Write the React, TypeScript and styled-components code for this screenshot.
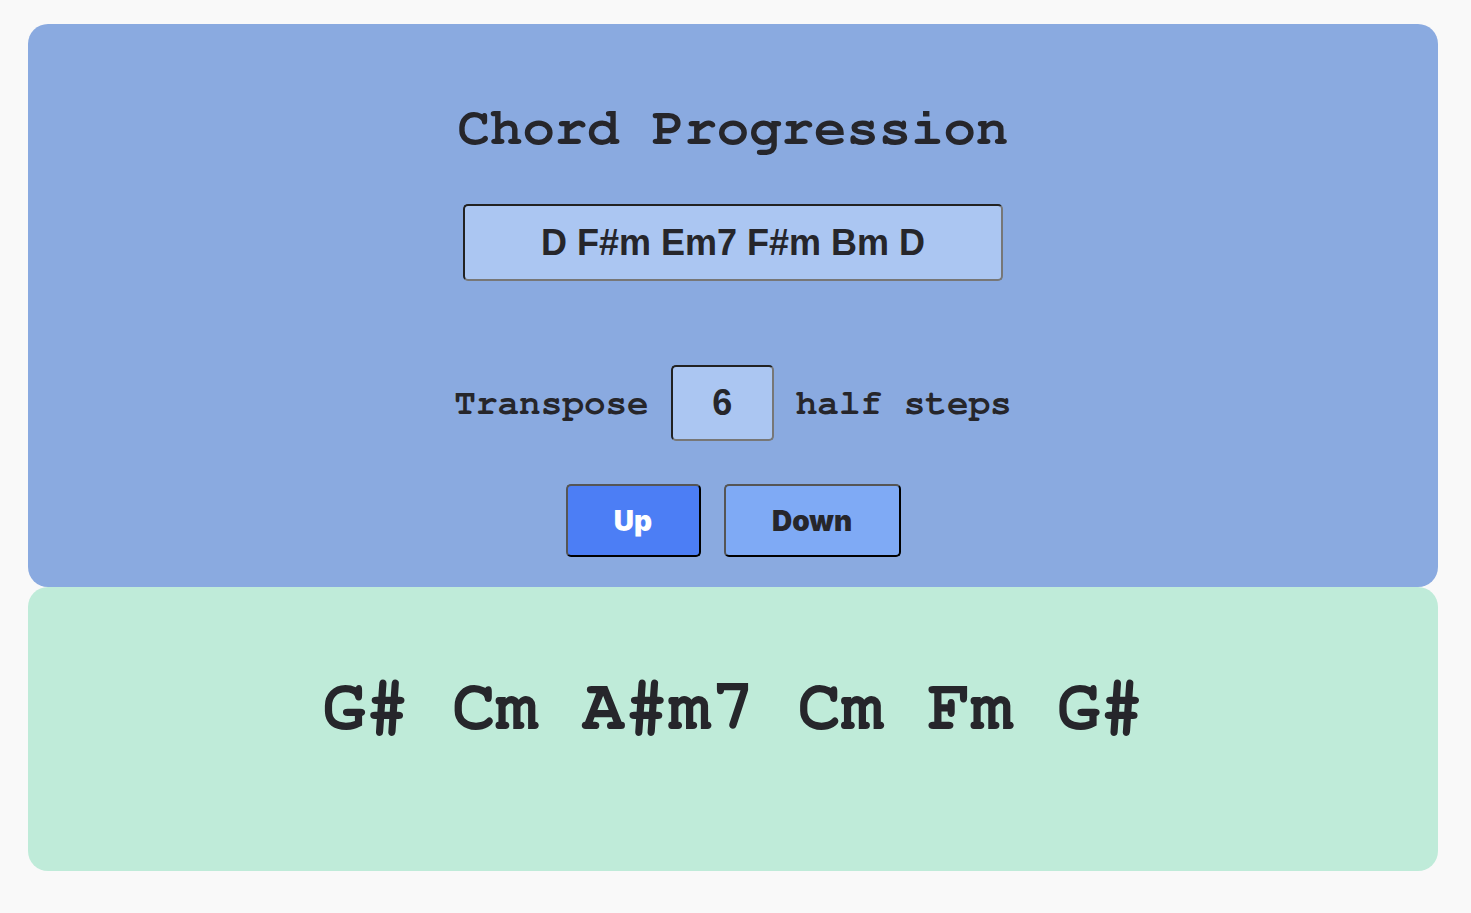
import React, { useState } from "react";
import styled, { createGlobalStyle } from "styled-components";

const Global = createGlobalStyle`
  html, body { margin: 0; padding: 0; background: #f9f9f9; }
  body { font-family: FreeMono, "Liberation Mono", monospace; color: #26262b; }
`;

const Page = styled.div`
  padding: 24px 33px 42px 28px;
  display: flex;
  flex-direction: column;
`;

const Panel = styled.section<{ $bg: string; $h: number }>`
  background: ${(p) => p.$bg};
  border-radius: 20px;
  height: ${(p) => p.$h}px;
  box-sizing: border-box;
  display: flex;
  flex-direction: column;
  align-items: center;
`;

const Title = styled.h1`
  margin: 74px 0 0;
  font-family: FreeMono, "Liberation Mono", monospace;
  font-weight: 700;
  font-size: 54px;
  line-height: 60px;
  color: #26262b;
`;

const ChordInput = styled.input`
  margin-top: 46px;
  width: 540px;
  height: 77px;
  box-sizing: border-box;
  border: 2px solid;
  border-color: #222 #777 #777 #222;
  border-radius: 5px;
  background: #abc6f2;
  font-family: "Liberation Sans", Arial, sans-serif;
  font-weight: 700;
  font-size: 36px;
  text-align: center;
  color: #26262b;
  outline: none;
`;

const Row = styled.div`
  margin-top: 84px;
  display: flex;
  align-items: center;
  gap: 22px;
`;

const Label = styled.span`
  font-family: FreeMono, "Liberation Mono", monospace;
  font-weight: 700;
  font-size: 36px;
  color: #26262b;
`;

const NumInput = styled(ChordInput)`
  margin-top: 0;
  width: 103px;
  height: 76px;
  font-size: 36px;
`;

const Buttons = styled.div`
  margin-top: 43px;
  display: flex;
  gap: 23px;
`;

const Btn = styled.button<{ $primary?: boolean; $w: number }>`
  width: ${(p) => p.$w}px;
  height: 73px;
  box-sizing: border-box;
  border: 2px solid;
  border-color: #555 #000 #000 #555;
  border-radius: 5px;
  background: ${(p) => (p.$primary ? "#4c7ef5" : "#7faaf5")};
  color: ${(p) => (p.$primary ? "#fff" : "#26262b")};
  font-family: Inter, "Noto Sans", sans-serif;
  font-weight: 900;
  font-size: 28px;
  cursor: pointer;
`;

const Result = styled.div`
  margin-top: 80px;
  font-family: FreeMono, "Liberation Mono", monospace;
  font-weight: 700;
  font-size: 72px;
  line-height: 80px;
  color: #26262b;
  white-space: pre;
`;

export default function App() {
  const [chords, setChords] = useState("D F#m Em7 F#m Bm D");
  const [steps, setSteps] = useState("6");
  return (
    <>
      <Global />
      <Page>
        <Panel $bg="#8aaae0" $h={563}>
          <Title>Chord Progression</Title>
          <ChordInput value={chords} onChange={(e) => setChords(e.target.value)} />
          <Row>
            <Label>Transpose</Label>
            <NumInput value={steps} onChange={(e) => setSteps(e.target.value)} />
            <Label>half steps</Label>
          </Row>
          <Buttons>
            <Btn $primary $w={135}>Up</Btn>
            <Btn $w={177}>Down</Btn>
          </Buttons>
        </Panel>
        <Panel $bg="#bfebd9" $h={284}>
          <Result>G# Cm A#m7 Cm Fm G#</Result>
        </Panel>
      </Page>
    </>
  );
}
